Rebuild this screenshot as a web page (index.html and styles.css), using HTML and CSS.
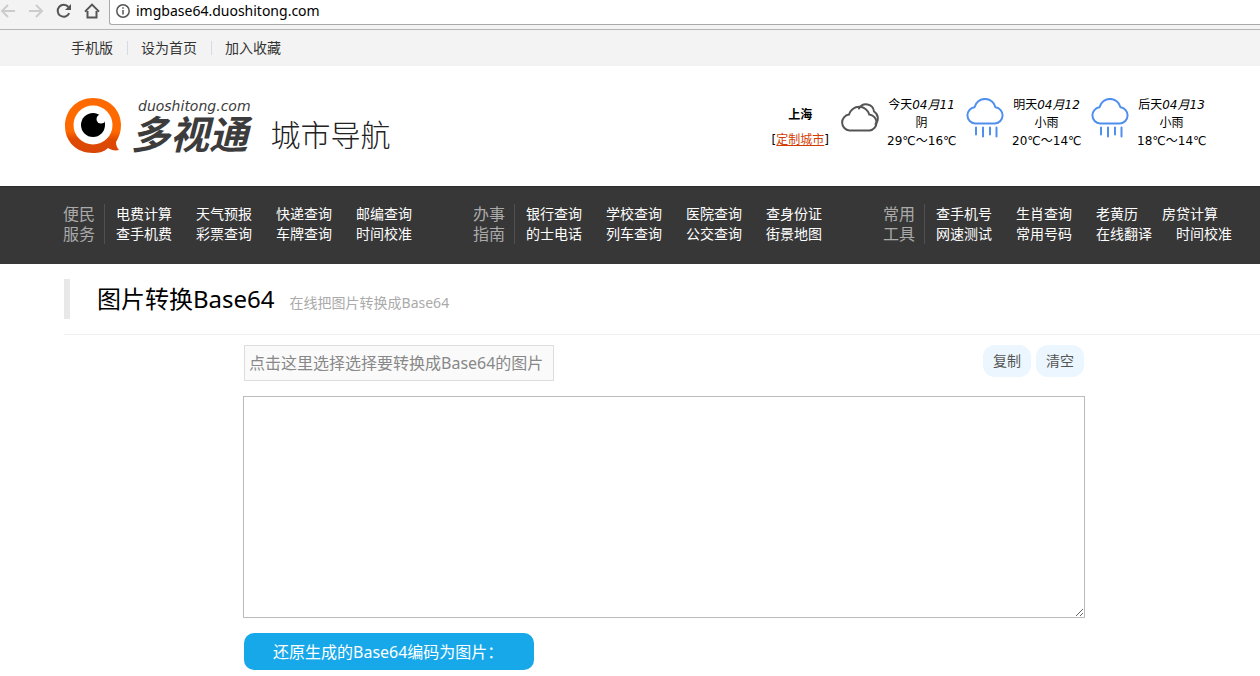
FILE: index.html
```html
<!DOCTYPE html>
<html lang="zh-CN">
<head>
<meta charset="utf-8">
<title>图片转换Base64</title>
<link rel="stylesheet" href="styles.css">
</head>
<body>
<div class="browser">
  <div class="browser-tools">
    <button class="tool tool-off" aria-label="后退"><svg viewBox="0 0 16 16"><path d="M15 8H2M8 2 2 8l6 6"/></svg></button>
    <button class="tool tool-off" aria-label="前进"><svg viewBox="0 0 16 16"><path d="M1 8h13M8 2l6 6-6 6"/></svg></button>
    <button class="tool" aria-label="刷新"><svg viewBox="0 0 16 16"><path d="M13.2 10.2A6 6 0 1 1 12.4 4"/><path class="solid" d="M15 1v6H9z"/></svg></button>
    <button class="tool" aria-label="主页"><svg viewBox="0 0 16 16"><path d="M1 8.6 8 1.6l7 7M3.500 8v6.600h9V8"/></svg></button>
  </div>
  <label class="address">
    <svg viewBox="0 0 14 14" aria-hidden="true"><circle cx="7" cy="7" r="6.2"/><path d="M7 6v4.600M7 3.200v1.600"/></svg>
    <input type="text" aria-label="地址" value="imgbase64.duoshitong.com">
  </label>
</div>

<nav class="topbar">
  <a href="#">手机版</a><a href="#">设为首页</a><a href="#">加入收藏</a>
</nav>

<header class="header">
  <a class="brand" href="#">
    <svg class="brand-eye" viewBox="0 0 58 58" aria-hidden="true">
      <defs><linearGradient id="eye" x1="0" y1="0" x2="0" y2="1"><stop offset="0.6" stop-color="#ff6a00"/><stop offset="0.75" stop-color="#e04a00"/><stop offset="1" stop-color="#d84608"/></linearGradient></defs>
      <path fill="url(#eye)" d="M29 1C44 1 57 12 57 28c0 7-2 12-5 17 0 3 1 6 3 8-4 1-8 0-11-2-4 4-9 5-15 5C13 56 1 45 1 29S13 1 29 1z"/>
      <circle cx="29" cy="28" r="19.500" fill="#fff"/>
      <circle cx="29" cy="28" r="12" fill="#000"/>
      <circle cx="37" cy="22" r="4.500" fill="#fff"/>
    </svg>
    <span class="brand-words"><span class="brand-domain">duoshitong.com</span><span class="brand-name">多视通</span></span>
  </a>
  <span class="site-name">城市导航</span>
  <section class="weather">
    <div class="city"><b>上海</b><span>[<a href="#">定制城市</a>]</span></div>
    <div class="day">
      <svg class="sky cloudy" viewBox="0 0 40 40" aria-hidden="true"><path d="M19 10.500A8 8 0 0 1 34 13.500a8 8 0 0 1 1.500 12.500"/><path d="M9.500 32.500a8 8 0 0 1-.5-15.900 10.500 10.500 0 0 1 20.300 0 8 8 0 0 1 .2 15.900z"/></svg>
      <p>今天<i>04月11</i><br>阴<br>29℃～16℃</p>
    </div>
    <div class="day">
      <svg class="sky rain" viewBox="0 0 40 40" aria-hidden="true"><path d="M10 25.500a8.200 8.200 0 0 1-.5-16.300 10.800 10.800 0 0 1 21 0 8.200 8.200 0 0 1-.5 16.300z"/><path d="M11 29.500v7M18 29.500v9M25 29.500v7M31.500 29.500v9"/></svg>
      <p>明天<i>04月12</i><br>小雨<br>20℃～14℃</p>
    </div>
    <div class="day">
      <svg class="sky rain" viewBox="0 0 40 40" aria-hidden="true"><path d="M10 25.500a8.200 8.200 0 0 1-.5-16.300 10.800 10.800 0 0 1 21 0 8.200 8.200 0 0 1-.5 16.300z"/><path d="M11 29.500v7M18 29.500v9M25 29.500v7M31.500 29.500v9"/></svg>
      <p>后天<i>04月13</i><br>小雨<br>18℃～14℃</p>
    </div>
  </section>
</header>

<nav class="services">
  <section class="group">
    <h2>便民<br>服务</h2>
    <div class="links">
      <div class="row"><a href="#">电费计算</a><a href="#">天气预报</a><a href="#">快递查询</a><a href="#">邮编查询</a></div>
      <div class="row"><a href="#">查手机费</a><a href="#">彩票查询</a><a href="#">车牌查询</a><a href="#">时间校准</a></div>
    </div>
  </section>
  <section class="group">
    <h2>办事<br>指南</h2>
    <div class="links">
      <div class="row"><a href="#">银行查询</a><a href="#">学校查询</a><a href="#">医院查询</a><a href="#">查身份证</a></div>
      <div class="row"><a href="#">的士电话</a><a href="#">列车查询</a><a href="#">公交查询</a><a href="#">街景地图</a></div>
    </div>
  </section>
  <section class="group">
    <h2>常用<br>工具</h2>
    <div class="links">
      <div class="row"><a href="#">查手机号</a><a href="#">生肖查询</a><a href="#">老黄历</a><a href="#">房贷计算</a></div>
      <div class="row"><a href="#">网速测试</a><a href="#">常用号码</a><a href="#">在线翻译</a><a href="#">时间校准</a></div>
    </div>
  </section>
</nav>

<main class="main">
  <div class="title"><h1>图片转换Base64</h1><p>在线把图片转换成Base64</p></div>
  <form class="converter">
    <div class="actions">
      <button type="button" class="pick">点击这里选择选择要转换成Base64的图片</button>
      <div class="minor"><button type="button">复制</button><button type="button">清空</button></div>
    </div>
    <textarea class="code" aria-label="Base64编码"></textarea>
    <button type="button" class="restore">还原生成的Base64编码为图片：</button>
  </form>
</main>
</body>
</html>
```

FILE: styles.css
```css
* { box-sizing: border-box; }
body {
  margin: 0;
  background: #fff;
  color: #000;
  font: 14px/20px "Noto Sans", "Noto Sans CJK SC", sans-serif;
  overflow-x: hidden;
}
h1, h2, p { margin: 0; font-weight: 400; }
a { color: inherit; text-decoration: none; }
button, input, textarea { font-family: inherit; }
button { border: 0; cursor: pointer; white-space: nowrap; }
svg { flex: none; fill: none; }

.browser {
  display: flex;
  height: 30px;
  background: #f3f3f3;
  border-bottom: 1px solid #b5b5b5;
}
.browser-tools { display: flex; gap: 12px; width: 109px; height: 22px; align-items: center; }
.tool { width: 16px; height: 16px; padding: 0; background: none; color: #555; }
.tool-off { color: #ccc; }
.tool svg { display: block; stroke: currentColor; stroke-width: 2; }
.tool .solid { fill: currentColor; stroke: none; }
.address {
  flex: 1;
  display: flex;
  align-items: center;
  gap: 6px;
  height: 25px;
  padding: 0 0 3px 6px;
  background: #fff;
  border: solid #a9a9a9;
  border-width: 0 0 1px 1px;
  border-bottom-left-radius: 3px;
}
.address svg { width: 14px; height: 14px; stroke: #555; stroke-width: 1.5; }
.address input { flex: 1; border: 0; padding: 0; font-size: 14px; line-height: 20px; background: none; outline: 0; }

.topbar { display: flex; align-items: center; height: 36px; padding-left: 58px; background: #f3f3f3; color: #333; }
.topbar a { padding: 0 14px 0 13px; line-height: 14px; }
.topbar a + a { border-left: 1px solid #d5dae6; }

.header { display: flex; align-items: center; height: 120px; padding: 0 54px 0 64px; }
.brand { display: flex; align-items: center; gap: 9px; color: #3c3c3c; }
.brand-eye { width: 58px; height: 58px; }
.brand-words { display: flex; flex-direction: column; font-style: italic; white-space: nowrap; }
.brand-domain { padding-left: 7px; font: italic 14px/16px "DejaVu Sans", sans-serif; }
.brand-name { font-size: 39px; line-height: 40px; font-weight: 700; }
.site-name { margin-left: 20px; padding-top: 18px; font-size: 30px; line-height: 40px; font-weight: 300; color: #222; white-space: nowrap; }
.weather {
  display: flex;
  align-items: flex-start;
  gap: 10px;
  margin-left: auto;
  padding-bottom: 6px;
  font: 12px/18px "DejaVu Sans", "Noto Sans CJK SC", sans-serif;
  text-align: center;
  white-space: nowrap;
}
.city { display: flex; flex-direction: column; gap: 7px; padding: 10px 1px 0 0; }
.city a { color: #d23c00; text-decoration: underline; }
.day { display: flex; gap: 7px; }
.day p { width: 69px; }
.day + .day { margin-left: -1px; }
.sky { width: 40px; height: 40px; margin-top: 2px; stroke-width: 2; stroke-linecap: round; }
.cloudy { stroke: #555; }
.rain { stroke: #4f8fee; }

.services {
  display: grid;
  grid-template-columns: repeat(3, 410px);
  align-items: center;
  height: 78px;
  padding: 0 0 4px 63px;
  background: #373737;
  border-top: 1px solid #2c2c2c;
  color: #fff;
}
.group { display: flex; align-items: center; gap: 11px; }
.group h2 { width: 42px; border-right: 1px solid #505050; color: #aaa; font-size: 16px; line-height: 20px; }
.row { display: flex; gap: 24px; font-size: 14px; line-height: 20px; white-space: nowrap; }

.main { padding: 15px 0 0 64px; }
.title {
  display: flex;
  align-items: baseline;
  gap: 15px;
  padding-bottom: 15px;
  border-bottom: 1px solid #eee;
}
.title h1 { padding-left: 27px; border-left: 6px solid #e8e8e8; font-size: 24px; line-height: 40px; }
.title p { color: #aaa; font-size: 14px; }
.converter { max-width: 842px; margin: 10px 0 0 179px; }
.actions { display: flex; justify-content: space-between; align-items: flex-start; padding: 0 1px 15px; }
.pick { height: 36px; padding: 0 10px 2px 4px; background: #fafafa; border: 1px solid #ddd; color: #888; font-size: 16px; }
.minor { display: flex; gap: 5px; }
.minor button { height: 32px; padding: 0 10px 2px; border-radius: 12px; background: #ecf6fe; color: #555; font-size: 14px; }
.code { display: block; width: 100%; height: 222px; border: 1px solid #bbb; resize: both; }
.restore { height: 37px; margin: 15px 0 6px 1px; padding: 0 31px 2px 29px; border-radius: 10px; background: #17a8ea; color: #fff; font-size: 16px; }
```
